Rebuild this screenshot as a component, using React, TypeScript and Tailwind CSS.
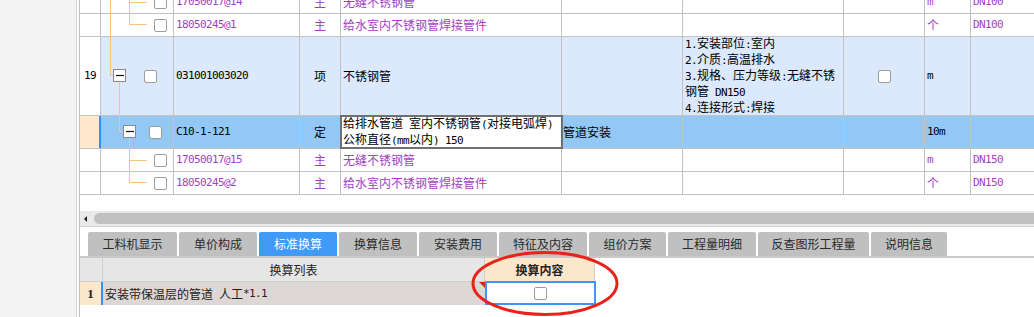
import React from "react";

function Mix({ t }: { t: string }) {
  const parts = t.split(/([\x20-\x7e]+)/).filter((p) => p.length > 0);
  return (
    <>
      {parts.map((p, i) =>
        /^[\x20-\x7e]+$/.test(p) ? (
          <span
            key={i}
            className="font-['DejaVu_Sans_Mono',monospace] text-[11px] tracking-[-0.62px] whitespace-pre"
          >
            {p}
          </span>
        ) : (
          <span key={i}>{p}</span>
        )
      )}
    </>
  );
}

function Check() {
  return <div className="w-[13px] h-[13px] shrink-0 rounded-[2px] border border-[#9c9c9c] bg-white" />;
}

const OR = "#f6c47f";

function Tree({ w, h, kind }: { w: number; h: number; kind: string }) {
  const L = (x1: number, y1: number, x2: number, y2: number, k: number) => (
    <line key={k} x1={x1} y1={y1} x2={x2} y2={y2} stroke={OR} strokeWidth={1} />
  );
  const els: React.ReactNode[] = [];
  if (kind === "a") {
    els.push(L(9.5, 0, 9.5, h + 1, 1), L(28.5, 0, 28.5, h + 1, 2), L(28, 11.5, 46, 11.5, 3));
  } else if (kind === "b") {
    els.push(L(9.5, 0, 9.5, h + 1, 1), L(28.5, 0, 28.5, 10.5, 2), L(28, 10.5, 46, 10.5, 3));
  } else if (kind === "p") {
    els.push(L(9.5, 0, 9.5, 38.5, 1), L(9, 38.5, 12.5, 38.5, 2), L(18.5, 45, 18.5, h + 1, 3));
    els.push(
      <rect key={4} x={12.5} y={32.5} width={12} height={12} fill="#fff" stroke="#8a8a8a" />,
      <line key={5} x1={15} y1={38.5} x2={23} y2={38.5} stroke="#111" strokeWidth={1.2} />
    );
  } else if (kind === "c") {
    els.push(L(18.5, 0, 18.5, 15.5, 1), L(18, 15.5, 22.5, 15.5, 2), L(28.5, 22, 28.5, h + 1, 3));
    els.push(
      <rect key={4} x={22.5} y={9.5} width={12} height={12} fill="#fff" stroke="#8a8a8a" />,
      <line key={5} x1={25} y1={15.5} x2={33} y2={15.5} stroke="#111" strokeWidth={1.2} />
    );
  } else if (kind === "d") {
    els.push(L(28.5, 0, 28.5, h + 1, 1), L(28, 11.5, 46, 11.5, 2));
  } else if (kind === "e") {
    els.push(L(28.5, 0, 28.5, 10.5, 1), L(28, 10.5, 46, 10.5, 2));
  }
  return (
    <svg width={w} height={h} className="shrink-0 overflow-visible">
      {els}
    </svg>
  );
}

type RowProps = {
  hClass: string;
  hdr?: string;
  hdrClass: string;
  bgClass: string;
  textClass: string;
  tree: React.ReactNode;
  code: string;
  type: string;
  name: React.ReactNode;
  nameClass?: string;
  col6?: string;
  feat?: React.ReactNode;
  chk?: boolean;
  unit?: string;
  spec?: string;
};

function Row(p: RowProps) {
  const cell = "shrink-0 border-r border-[#c2c2c2] flex items-center";
  return (
    <div className={`flex ${p.hClass} border-b border-[#c2c2c2]`}>
      <div className={`w-[21px] shrink-0 flex items-center justify-center text-black ${p.hdrClass}`}>
        {p.hdr && <Mix t={p.hdr} />}
      </div>
      <div className={`flex flex-1 ${p.bgClass} ${p.textClass}`}>
        <div className={`w-[73px] ${cell}`}>
          {p.tree}
          <Check />
        </div>
        <div className={`w-[126px] pl-[2px] ${cell}`}>
          <Mix t={p.code} />
        </div>
        <div className={`w-[41px] justify-center ${cell}`}>{p.type}</div>
        <div className={`w-[221px] pl-[2px] ${cell} ${p.nameClass ?? ""}`}>{p.name}</div>
        <div className={`w-[121px] pl-[1px] ${cell}`}>{p.col6}</div>
        <div className={`w-[161px] pl-[2px] ${cell}`}>{p.feat}</div>
        <div className={`w-[81px] justify-center ${cell}`}>{p.chk && <Check />}</div>
        <div className={`w-[46px] pl-[2px] ${cell}`}>{p.unit && <Mix t={p.unit} />}</div>
        <div className="flex-1 pl-[2px] flex items-center">{p.spec && <Mix t={p.spec} />}</div>
      </div>
    </div>
  );
}

const TABS: [string, string][] = [
  ["工料机显示", "w-[89px]"],
  ["单价构成", "w-[78px]"],
  ["标准换算", "w-[78px]"],
  ["换算信息", "w-[78px]"],
  ["安装费用", "w-[78px]"],
  ["特征及内容", "w-[88px]"],
  ["组价方案", "w-[77px]"],
  ["工程量明细", "w-[88px]"],
  ["反查图形工程量", "w-[111px]"],
  ["说明信息", "w-[76px]"],
];

export default function App() {
  const purple = "text-[#a33fc2]";
  const white = "border-r border-[#c2c2c2] bg-white";
  return (
    <div className="relative w-[1034px] h-[317px] overflow-hidden bg-white flex font-['Noto_Sans_CJK_SC',sans-serif] text-[12px] leading-[14px] text-black">
      <div className="w-[77px] h-full shrink-0 bg-[#f3f3f3] border-r border-[#d6d6d6]" />
      <div className="w-[2px] shrink-0 bg-[#fbfbfb]" />
      <div className="flex-1 flex flex-col border-l border-[#c2c2c2] min-w-0">
        {/* main grid */}
        <div className="h-[196px] overflow-hidden shrink-0">
          <div className="-mt-[9px]">
            <Row
              hClass="h-[23px]"
              hdrClass={white}
              bgClass="bg-white"
              textClass={purple}
              tree={<Tree w={53} h={22} kind="a" />}
              code="17050017@14"
              type="主"
              name="无缝不锈钢管"
              unit="m"
              spec="DN100"
            />
            <Row
              hClass="h-[23px]"
              hdrClass={white}
              bgClass="bg-white"
              textClass={purple}
              tree={<Tree w={53} h={22} kind="b" />}
              code="18050245@1"
              type="主"
              name="给水室内不锈钢管焊接管件"
              unit="个"
              spec="DN100"
            />
            <Row
              hClass="h-[79px]"
              hdr="19"
              hdrClass={white}
              bgClass="bg-[#dce9fc]"
              textClass="text-black"
              tree={<Tree w={43} h={78} kind="p" />}
              code="031001003020"
              type="项"
              name="不锈钢管"
              feat={
                <div className="flex flex-col">
                  <div><Mix t="1.安装部位:室内" /></div>
                  <div><Mix t="2.介质:高温排水" /></div>
                  <div><Mix t="3.规格、压力等级:无缝不锈" /></div>
                  <div><Mix t="钢管 DN150" /></div>
                  <div><Mix t="4.连接形式:焊接" /></div>
                </div>
              }
              chk
              unit="m"
            />
            <Row
              hClass="h-[33px]"
              hdrClass="border-r-2 border-[#3a8cec] bg-[#ffe8cc]"
              bgClass="bg-[#93c8f5]"
              textClass="text-black"
              tree={<Tree w={48} h={32} kind="c" />}
              code="C10-1-121"
              type="定"
              nameClass="bg-white outline-2 outline-solid outline-[#707070] -outline-offset-1 relative z-10"
              name={
                <div className="flex flex-col">
                  <div><Mix t="给排水管道 室内不锈钢管(对接电弧焊)" /></div>
                  <div><Mix t="公称直径(mm以内) 150" /></div>
                </div>
              }
              col6="管道安装"
              unit="10m"
            />
            <Row
              hClass="h-[23px]"
              hdrClass={white}
              bgClass="bg-white"
              textClass={purple}
              tree={<Tree w={53} h={22} kind="d" />}
              code="17050017@15"
              type="主"
              name="无缝不锈钢管"
              unit="m"
              spec="DN150"
            />
            <Row
              hClass="h-[23px]"
              hdrClass={white}
              bgClass="bg-white"
              textClass={purple}
              tree={<Tree w={53} h={22} kind="e" />}
              code="18050245@2"
              type="主"
              name="给水室内不锈钢管焊接管件"
              unit="个"
              spec="DN150"
            />
          </div>
        </div>
        <div className="h-[15px] shrink-0" />
        {/* scrollbar */}
        <div className="h-[16px] shrink-0 bg-[#e9e9e9] border-b border-[#d2d2d2] flex items-center">
          <svg width={14} height={16} className="shrink-0">
            <polygon points="4,8 7,5 7,11" fill="#222" />
          </svg>
          <div className="flex-1 h-[11px] bg-[#c1c1c1] rounded-l-full" />
        </div>
        <div className="h-[5px] shrink-0" />
        {/* tabs */}
        <div className="h-[24px] shrink-0 flex gap-[2px] pl-[8px]">
          {TABS.map(([t, w], i) => (
            <div
              key={t}
              className={`${w} shrink-0 rounded-t-[2px] flex items-center justify-center text-[12px] ${
                i === 2 ? "bg-[#3f9bf7] text-white" : "bg-[#c0c0c0] text-[#2b2b2b]"
              }`}
            >
              {t}
            </div>
          ))}
        </div>
        <div className="h-[2px] shrink-0 bg-[#c9c9c9]" />
        {/* bottom grid */}
        <div className="flex flex-col">
          <div className="flex h-[24px]">
            <div className="w-[23px] shrink-0 bg-[#e6e6e6] border-r border-b border-[#cfcfcf]" />
            <div className="w-[382px] shrink-0 bg-[#e6e6e6] border-r border-b border-[#cfcfcf] flex items-center justify-center text-[#222]">
              换算列表
            </div>
            <div className="w-[110px] shrink-0 bg-[#fde7cb] border-r border-b border-[#cfcfcf] flex items-center justify-center font-bold text-[#222]">
              换算内容
            </div>
          </div>
          <div className="flex h-[23px]">
            <div className="w-[23px] shrink-0 bg-[#fde7cb] border-r-2 border-[#3d8ef0] flex items-center justify-center font-['Liberation_Serif',serif] font-bold text-[13px] text-[#222]">
              1
            </div>
            <div className="w-[382px] shrink-0 relative bg-[#ddd8d5] flex items-center pl-[2px] text-[#222]">
              <Mix t="安装带保温层的管道 人工*1.1" />
              <svg width={6} height={6} className="absolute top-0 right-0">
                <polygon points="0,0 6,0 6,6" fill="#e0201a" />
              </svg>
            </div>
            <div className="w-[111px] shrink-0 -mt-px border-2 border-[#3f95f5] bg-white flex items-center justify-center">
              <Check />
            </div>
          </div>
        </div>
      </div>
      {/* red annotation ellipse */}
      <svg
        width={152}
        height={67}
        className="absolute left-[470px] top-[250px] pointer-events-none"
      >
        <ellipse cx={75} cy={33.5} rx={72} ry={31} fill="none" stroke="#e8231a" strokeWidth={3} />
      </svg>
    </div>
  );
}
